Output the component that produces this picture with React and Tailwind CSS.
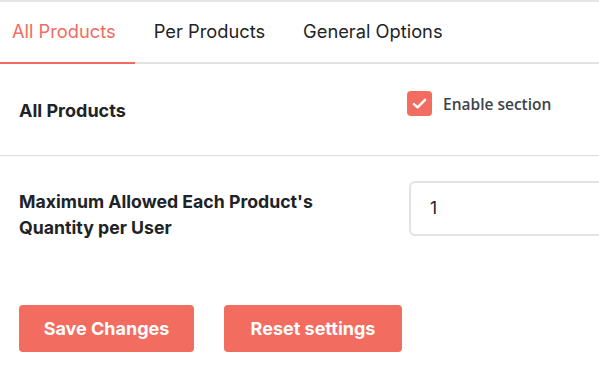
export default function App() {
  const inter = { fontFamily: "Inter, 'Liberation Sans', sans-serif" };
  return (
    <div className="w-[599px] h-[375px] bg-white overflow-hidden border-t-2 border-[#e5e5e5] text-[#1d2327]" style={inter}>
      <div className="flex h-[62px] border-b-2 border-[#e2e2e2] text-[18.3px]">
        <div className="flex items-center pl-3 pr-[19px] text-[#f26c5f] border-b-2 border-[#f26c5f] -mb-[2px]">All Products</div>
        <div className="flex items-center px-[19px]">Per Products</div>
        <div className="flex items-center px-[19px]">General Options</div>
      </div>
      <div className="flex items-start h-[92px] border-b border-[#dcdcdc] pl-[19px]">
        <div className="w-[388px] pt-[34px] font-bold text-[18px] leading-[26px]">All Products</div>
        <label className="flex items-center gap-[11px] pt-[27px]">
          <span className="w-[25px] h-[25px] rounded-[4px] bg-[#f26c5f] flex items-center justify-center">
            <svg width="17" height="17" viewBox="0 0 16 16" fill="none" stroke="white" strokeWidth="2.3" strokeLinecap="round" strokeLinejoin="round">
              <path d="M2.8 8.6l3.4 3L13.2 4.6" />
            </svg>
          </span>
          <span className="text-[15.5px] font-semibold text-[#3c434a] pt-[2px]" style={{ fontFamily: "'Open Sans', sans-serif" }}>Enable section</span>
        </label>
      </div>
      <div className="flex items-start h-[80px] pl-[19px] pt-[25px]">
        <div className="w-[390px] pt-[8px] font-bold text-[17.7px] leading-[26px] whitespace-nowrap">
          Maximum Allowed Each Product's<br />Quantity per User
        </div>
        <div className="flex-1 h-[55px] border-2 border-[#e3e3e3] rounded-[6px] border-r-0 rounded-r-none flex items-center pl-[19px] text-[17.5px]">
          1
        </div>
      </div>
      <div className="flex gap-[30px] pl-[19px] pt-[69px]">
        <button className="w-[175px] h-[47px] rounded-[4px] bg-[#f26c5f] text-white font-bold text-[18px]">Save Changes</button>
        <button className="w-[178px] h-[47px] rounded-[4px] bg-[#f26c5f] text-white font-bold text-[18px]">Reset settings</button>
      </div>
    </div>
  );
}
